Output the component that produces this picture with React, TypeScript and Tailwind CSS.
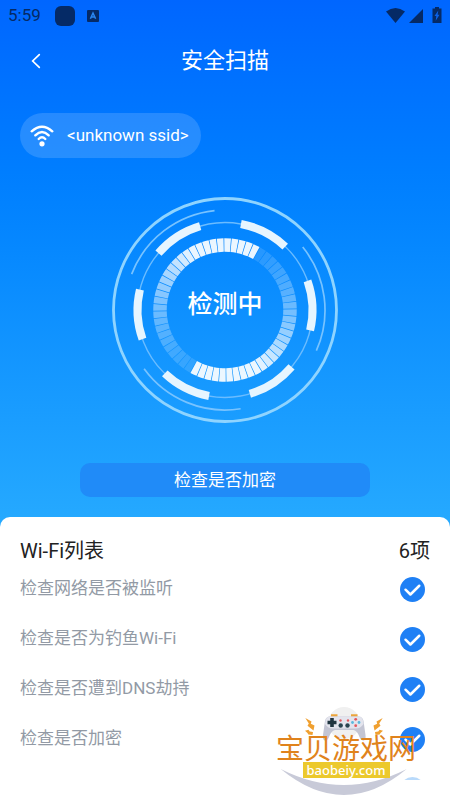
interface ScanItem {
  id: string;
  label: string;
}

const items: ScanItem[] = [
  { id: "monitored", label: "检查网络是否被监听" },
  { id: "phishing", label: "检查是否为钓鱼Wi-Fi" },
  { id: "dns", label: "检查是否遭到DNS劫持" },
  { id: "encrypted", label: "检查是否加密" },
];

const CENTER = 114;

/** Point on a circle, angle in degrees clockwise from the top */
function point(radius: number, angle: number) {
  const rad = (angle * Math.PI) / 180;
  return `${(CENTER + radius * Math.sin(rad)).toFixed(2)} ${(CENTER - radius * Math.cos(rad)).toFixed(2)}`;
}

function arc(radius: number, from: number, to: number) {
  return `M${point(radius, from)} A${radius} ${radius} 0 0 1 ${point(radius, to)}`;
}

/** Each half of the gauge fades in from its tail to its head */
function tickOpacity(index: number) {
  const t = (index % 30) / 29;
  return Math.min(0.92, 0.13 + t * 0.55 + t * t * 0.9);
}

function StatusBar() {
  return (
    <div className="flex h-8 items-center justify-between px-2 text-[#052a66]">
      <div className="flex items-center">
        <span className="text-[17px]">5:59</span>
        <span className="ml-3.5 h-5 w-5 rounded-md bg-current" />
        <svg className="ml-3 h-3 w-3" viewBox="0 0 12 12" aria-hidden="true">
          <rect width="12" height="12" rx="1" fill="currentColor" />
          <path d="M3.400 8.800 6 3l2.600 5.800M4.400 7h3.200" fill="none" stroke="#2a86f0" strokeWidth="1.500" />
        </svg>
      </div>
      <svg className="h-5 w-14" viewBox="0 0 56 20" fill="currentColor" aria-hidden="true">
        <path d="M0 5.500Q9.500-1.500 19 5.500L9.500 17z" />
        <path d="M23 17 37 3v14z" />
        <path d="M49 1h4v1.500h2.500V17h-9V2.500H49z" />
        <path d="M52.300 4.500 48.500 10h1.800l-.6 4.800 3.800-6h-1.900z" fill="#0a62ea" />
      </svg>
    </div>
  );
}

function WifiIcon() {
  return (
    <svg
      className="h-6 w-6"
      viewBox="0 0 24 24"
      fill="none"
      stroke="currentColor"
      strokeWidth="2.400"
      strokeLinecap="round"
      aria-hidden="true"
    >
      <path d="M1.700 7.300Q12-2 22.300 7.300" />
      <path d="M5.300 11.300Q12 4.800 18.700 11.300" />
      <path d="M8.700 15Q12 11.600 15.300 15" />
      <circle cx="12" cy="19.800" r="2.600" fill="currentColor" stroke="none" />
    </svg>
  );
}

function Scanner() {
  return (
    <div className="relative mx-auto mt-[38px] h-57 w-57 shrink-0">
      <svg className="h-full w-full" viewBox="0 0 228 228" fill="none" aria-hidden="true">
        <circle cx={CENTER} cy={CENTER} r="111.500" stroke="#8fd4ff" strokeWidth="2.800" />
        <circle cx={CENTER} cy={CENTER} r="87.500" stroke="#6bbcff" strokeWidth="1.400" />
        {[51, 171, 291].map((a) => (
          <path key={a} d={arc(100, a, a + 63)} stroke="#78c3ff" strokeWidth="1.700" />
        ))}
        {[10.5, 70.5, 130.5, 190.5, 250.5, 310.5].map((a) => (
          <path key={a} d={arc(87.5, a, a + 33)} stroke="#e6f5ff" strokeWidth="8" />
        ))}
        {Array.from({ length: 60 }, (_, i) => (
          <path
            key={i}
            d={arc(65, 29.4 + i * 6, 34.8 + i * 6)}
            stroke="white"
            strokeOpacity={tickOpacity(i)}
            strokeWidth="13.500"
          />
        ))}
      </svg>
      <p className="absolute inset-x-0 top-[95px] text-center text-[25px] leading-7 font-medium text-white">检测中</p>
    </div>
  );
}

function CheckBadge() {
  return (
    <svg className="h-[25px] w-[25px] shrink-0" viewBox="0 0 24 24" role="img" aria-label="已完成">
      <circle cx="12" cy="12" r="12" fill="#1f80f5" />
      <path
        d="m5.300 12.200 4.700 4.600 8.500-8.400"
        fill="none"
        stroke="white"
        strokeWidth="2.400"
        strokeLinecap="round"
        strokeLinejoin="round"
      />
    </svg>
  );
}

function PendingBadge() {
  return (
    <svg className="h-[25px] w-[25px] shrink-0" viewBox="0 0 24 24" aria-hidden="true">
      <circle cx="12" cy="12" r="12" fill="#b9dafb" />
    </svg>
  );
}

function Bolts() {
  return (
    <g fill="#f0a030">
      <path d="M31.300 14 37.500 17.500 36.800 19.700 40.500 21.500 39.500 26.500 33.500 21.700 34.800 19.500z" />
      <path d="M31 26.800 34.500 25.800 35.700 27.500 39 28 38.500 31 34.300 30.500 33.500 29z" />
    </g>
  );
}

function SiteBadge() {
  return (
    <a href="#" className="absolute right-8 bottom-1 block w-36">
      <svg className="absolute inset-0 h-full w-full" viewBox="0 0 144 92" aria-hidden="true">
        <circle cx="70" cy="19" r="16" fill="#f0f0f0" />
        <path d="M6.700 65Q70 117 132.700 65Q70 97 6.700 65z" fill="#c8cad8" />
        <Bolts />
        <g transform="matrix(-1 0 0 1 140 0)">
          <Bolts />
        </g>
        <path d="M57 10.300h6.500v3H57zM77 10.300h6.500v3H77z" fill="#eba53c" />
        <path
          d="M56 12.500h28.500q4 0 5 4.500l2 14q.5 4.500-1.500 5.500-3 .5-4.500-3.500-2-6-6-7H61q-4 1-6 7-1.500 4-4.500 3.500-2-1-1.500-5.500l2-14q1-4.500 5-4.500z"
          fill="#c3c5d3"
        />
        <path d="M56 12.500h28.500q3.500 0 4.500 4l.5 3.500q-3 4.500-8 4.500H59q-5 0-8-4.500l.5-3.500q1-4 4.500-4z" fill="#e3e4ed" />
        <path d="M56.200 14h3.600v2.700h2.700v3.600h-2.700V23h-3.600v-2.700h-2.700v-3.600h2.700z" fill="#203540" />
        <g fill="#e4575d">
          <circle cx="81.700" cy="15.300" r="1.400" />
          <circle cx="81.700" cy="21.700" r="1.400" />
          <circle cx="66.500" cy="16.500" r="1.200" />
          <circle cx="74" cy="16.500" r="1.200" />
        </g>
        <g fill="#5ab9de">
          <circle cx="78.500" cy="18.500" r="1.400" />
          <circle cx="85" cy="18.500" r="1.400" />
        </g>
        <g fill="#29434f">
          <circle cx="66.700" cy="21.500" r="2.200" />
          <circle cx="73.500" cy="21.500" r="2.200" />
        </g>
      </svg>
      <span className="relative flex flex-col items-center pt-[34px] pb-[18px]">
        <span className="text-[28px] leading-6 whitespace-nowrap text-[#e0831c]">宝贝游戏网</span>
        <span className="bg-[#ecc92c] px-1 font-['Noto_Sans',sans-serif] text-[13px] leading-4 font-medium text-white">
          baobeiy.com
        </span>
      </span>
    </a>
  );
}

export default function App() {
  return (
    <div className="relative flex h-screen flex-col overflow-hidden bg-linear-to-b from-[#0066ff] to-[#25a9ff] to-65% font-[Roboto,'Noto_Sans_CJK_SC',sans-serif]">
      <StatusBar />
      <header className="grid grid-cols-[40px_1fr_40px] items-center px-4 py-[13px]">
        <button type="button" aria-label="返回" className="flex justify-center text-white">
          <svg className="h-4 w-4" viewBox="0 0 16 16" fill="none" aria-hidden="true">
            <path d="M11.300 1.700 4.700 8l6.600 6.300" stroke="currentColor" strokeWidth="1.700" strokeLinecap="round" />
          </svg>
        </button>
        <h1 className="text-center text-[22px] leading-8 text-white">安全扫描</h1>
      </header>
      <div className="mt-[23px] ml-5 flex h-[45px] w-fit shrink-0 items-center gap-[13px] rounded-full bg-white/15 pr-3 pl-2.5 text-white">
        <WifiIcon />
        <span className="text-[17px]">&lt;unknown ssid&gt;</span>
      </div>
      <Scanner />
      <p className="mx-20 mt-[39px] rounded-[10px] bg-[#208bf8] text-center text-[17px] leading-[34px] text-white">
        检查是否加密
      </p>
      <main className="mt-5 flex min-h-0 flex-1 flex-col rounded-t-[10px] bg-white px-5 pt-[21px] pb-5">
        <div className="flex items-center justify-between text-xl leading-[26px] text-[#222]">
          <h2>Wi-Fi列表</h2>
          <span>6项</span>
        </div>
        <ul className="min-h-0 flex-1 overflow-hidden pr-[5px]">
          {items.map((item) => (
            <li key={item.id} className="flex h-[50px] items-center justify-between text-[17px] text-[#929aa5]">
              {item.label}
              <CheckBadge />
            </li>
          ))}
          <li className="flex h-[50px] items-center justify-end">
            <PendingBadge />
          </li>
        </ul>
      </main>
      <SiteBadge />
    </div>
  );
}
